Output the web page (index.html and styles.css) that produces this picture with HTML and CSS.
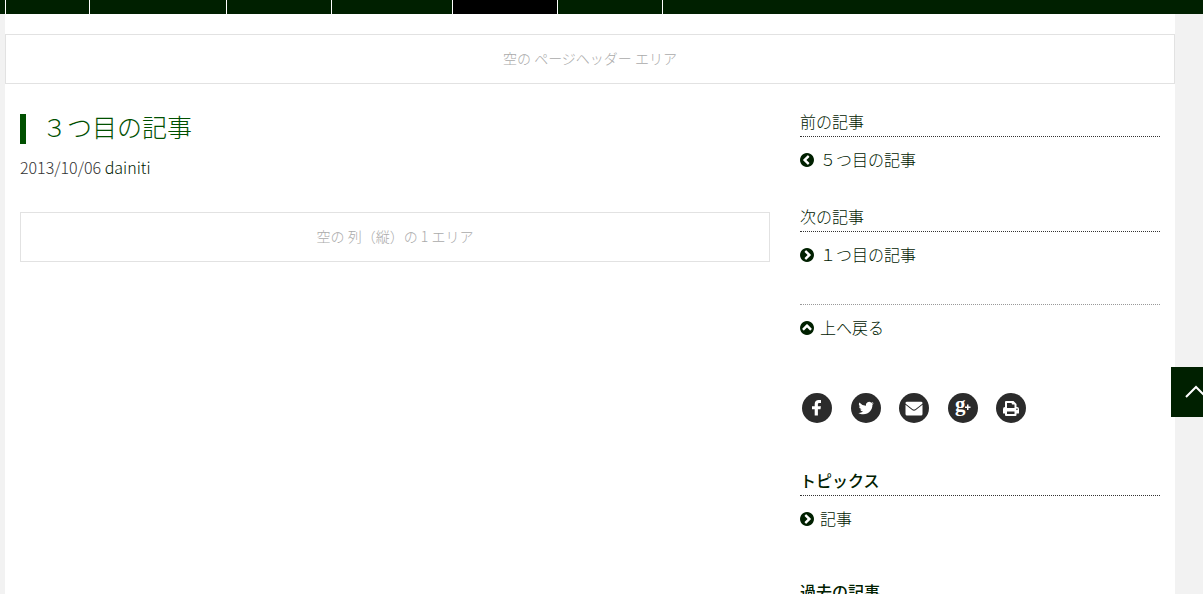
FILE: index.html
```html
<!DOCTYPE html>
<html lang="ja">
<head>
  <meta charset="UTF-8">
  <meta name="viewport" content="width=device-width, initial-scale=1.0">
  <title>３つ目の記事</title>
  <link rel="stylesheet" href="styles.css">
</head>
<body>
  <svg class="defs" width="0" height="0">
    <symbol id="chevron" viewBox="128 128 1536 1536">
      <path d="M1037 1395l102-102q19-19 19-45t-19-45l-307-307 307-307q19-19 19-45t-19-45l-102-102q-19-19-45-19t-45 19l-454 454q-19 19-19 45t19 45l454 454q19 19 45 19t45-19zm627-499q0 209-103 385.5t-279.5 279.5-385.5 103-385.5-103-279.5-279.5-103-385.5 103-385.5 279.5-279.5 385.5-103 385.5 103 279.5 279.5 103 385.5z"/>
    </symbol>
  </svg>

  <nav class="navbar">
    <span></span>
    <span></span>
    <span></span>
    <span></span>
    <span class="active"></span>
    <span></span>
    <span></span>
  </nav>

  <div class="page">
    <div class="empty-area">空の ページヘッダー エリア</div>
    <div class="row">
      <main class="main">
        <h1>３つ目の記事</h1>
        <p class="meta">2013/10/06 <a href="#">dainiti</a></p>
        <div class="empty-area">空の 列（縦）の 1 エリア</div>
      </main>

      <aside class="sidebar">
        <section class="block">
          <h2>前の記事</h2>
          <a class="item" href="#"><svg class="icon"><use href="#chevron"/></svg>５つ目の記事</a>
        </section>
        <section class="block">
          <h2>次の記事</h2>
          <a class="item" href="#"><svg class="icon right"><use href="#chevron"/></svg>１つ目の記事</a>
        </section>
        <section class="block up-block">
          <a class="item" href="#"><svg class="icon up"><use href="#chevron"/></svg>上へ戻る</a>
        </section>

        <div class="share">
          <a href="#">
            <svg viewBox="0 0 30 30"><path d="M19 7.200v2.900h-1.600c-1.200 0-1.500.6-1.500 1.400v1.800h3l-.4 3h-2.600V22.500h-3.200v-6.200H10v-3h2.700v-2.200c0-2.600 1.600-4 4-4 1.100 0 2 .1 2.300.1z"/></svg>
          </a>
          <a href="#">
            <svg viewBox="0 0 30 30"><path d="M23 10.200a6.500 6.500 0 0 1-1.600 1.600c.3 4.700-3.300 9.500-9.100 9.500-1.900 0-3.600-.5-5-1.400 1.700.2 3.400-.3 4.700-1.300a3.200 3.200 0 0 1-2.900-2.200c.5.1 1 .1 1.400-.1a3.200 3.200 0 0 1-2.500-3.100c.4.200.9.400 1.400.4a3.200 3.200 0 0 1-1-4.200 9 9 0 0 0 6.500 3.300 3.200 3.200 0 0 1 5.400-2.900c.7-.1 1.400-.4 2-.8-.2.800-.7 1.400-1.400 1.800.7-.1 1.300-.3 2.100-.6z"/></svg>
          </a>
          <a href="#">
            <svg viewBox="0 0 30 30"><path d="M6.500 11.800V21q0 1.500 1.500 1.500h14Q23.500 22.500 23.500 21v-9.200l-6.300 5q-2.200 1.700-4.400 0zM8 8.800q-1.500 0-1.500 1.200 0 .7.800 1.300l6.100 4.600q1.600 1.200 3.200 0l6.100-4.600q.8-.6.8-1.300 0-1.200-1.500-1.200z"/></svg>
          </a>
          <a href="#">
            <svg viewBox="0 0 30 30"><text class="g" x="7" y="18">g</text><path d="M19 11.500h1.500v2h2V15h-2v2H19v-2h-2v-1.500h2z"/></svg>
          </a>
          <a href="#">
            <svg viewBox="0 0 30 30"><path fill-rule="evenodd" d="M9 14V9q0-1 1-1h7.500L20.500 11v3h.5q2 0 2 2v4q0 .5-.5.500h-2V22q0 1-1 1H10q-1 0-1-1v-1.500H7.500Q7 20.500 7 20v-4q0-2 2-2zM11 10v5h7.500v-3.500h-2q-.8 0-.8-.8V10zM11 18.500V21h7.500v-2.500zM20.900 15.600a.7.700 0 1 0 .1 0z"/></svg>
          </a>
        </div>

        <section class="block topics">
          <h2>トピックス</h2>
          <a class="item" href="#"><svg class="icon right"><use href="#chevron"/></svg>記事</a>
        </section>
        <section class="block topics">
          <h2>過去の記事</h2>
        </section>
      </aside>
    </div>
  </div>

  <button class="page-top" type="button">
    <svg viewBox="0 0 24 24"><path d="M2 17l10-10 10 10"/></svg>
  </button>
</body>
</html>
```
FILE: styles.css
```css
* {
  box-sizing: border-box;
}
body {
  margin: 0;
  height: 100vh;
  overflow: hidden;
  background: #f2f2f2;
  color: #333;
  font-family: "Noto Sans CJK JP", sans-serif;
  font-size: 16px;
  font-weight: 300;
  line-height: 22px;
}
a {
  color: #002000;
  text-decoration: none;
}
h1, h2, p {
  margin: 0;
}
.defs {
  position: absolute;
}

/* nav */
.navbar {
  display: grid;
  grid-template-columns: 84px 137px 105px 121px 105px 105px 1fr;
  height: 14px;
  padding-left: 5px;
  background: #002000;
}
.navbar span {
  border-left: 1px solid #fff;
}
.navbar .active {
  background: #000;
}

/* layout */
.page {
  min-height: 100vh;
  margin: 0 28px 0 5px;
  padding-top: 20px;
  background: #fff;
}
.row {
  display: grid;
  grid-template-columns: 2fr 1fr;
}
.main, .sidebar {
  padding: 26px 15px 0;
}
.empty-area {
  padding: 12px 12px 14px;
  border: 1px solid #e2e2e2;
  color: #aaa;
  font-size: 14px;
  text-align: center;
}

/* article */
h1 {
  margin-top: 4px;
  padding: 0 0 6px 16px;
  border-left: 6px solid #005000;
  color: #005000;
  font-size: 25px;
  font-weight: 300;
  line-height: 24px;
}
.meta {
  margin: 12px 0 34px;
}

/* sidebar */
.block {
  margin-bottom: 35px;
}
h2 {
  margin-bottom: 11px;
  padding-bottom: 4px;
  border-bottom: 1px dotted #333;
  color: #002000;
  font-size: 16px;
  font-weight: 300;
}
.item {
  display: flex;
  align-items: center;
  gap: 6px;
}
.icon {
  width: 14px;
  height: 14px;
  margin-top: 2px;
  fill: #002000;
}
.icon.right {
  transform: rotate(180deg);
}
.icon.up {
  transform: rotate(90deg);
}
.up-block {
  margin: 39px 0 55px;
  padding-top: 11px;
  border-top: 1px dotted #999;
}
.topics {
  margin-bottom: 51px;
}
.topics h2 {
  font-weight: 500;
}
.share {
  display: flex;
  justify-content: space-between;
  width: 224px;
  margin: 0 0 46px 2px;
}
.share a {
  width: 30px;
  height: 30px;
  border-radius: 50%;
  background: #2b2b2b;
}
.share svg {
  display: block;
  fill: #fff;
}
.share .g {
  font: bold 21px "Liberation Serif", serif;
}

/* back to top */
.page-top {
  position: fixed;
  top: 367px;
  right: -18px;
  width: 50px;
  height: 50px;
  padding: 13px;
  border: 0;
  background: #002000;
}
.page-top svg {
  display: block;
  fill: none;
  stroke: #fff;
  stroke-width: 2;
}
```
